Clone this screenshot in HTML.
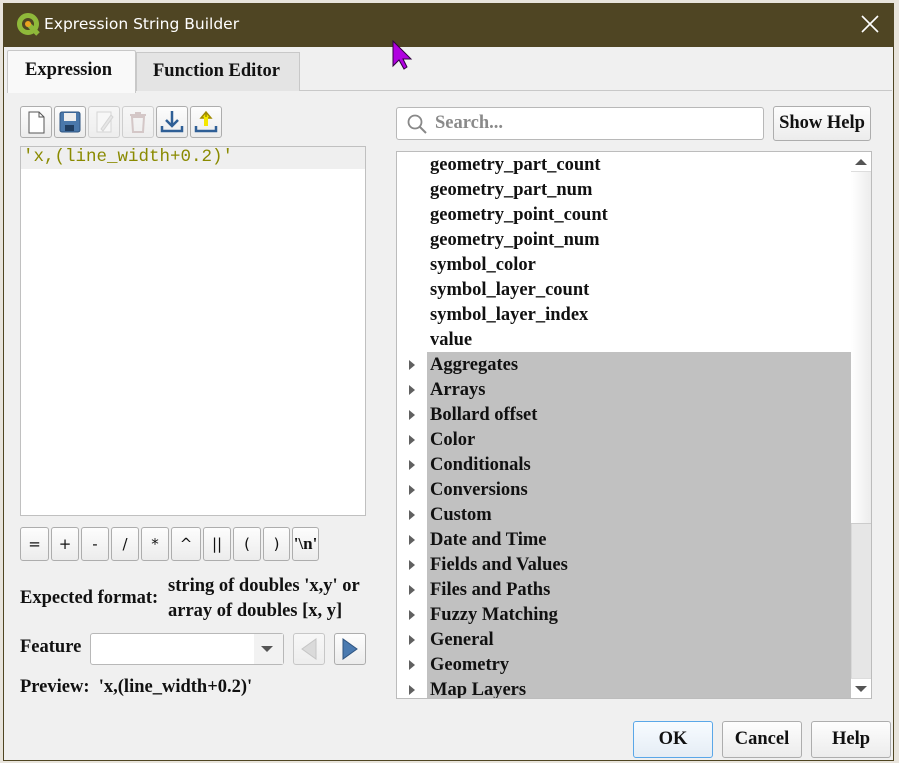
<!DOCTYPE html>
<html><head><meta charset="utf-8"><style>
*{box-sizing:border-box;margin:0;padding:0}
body{width:899px;height:763px;background:#e8e4dc;position:relative;overflow:hidden;font-family:"Liberation Serif",serif;font-weight:bold;color:#111;font-size:18.5px}
.abs{position:absolute}
.dlg{left:3px;top:3px;width:891px;height:758px;background:#f0f0f0;border:1px solid #4f4522}
.title{left:3px;top:3px;width:891px;height:44px;background:#4f4523;color:#fff;font-family:"DejaVu Sans",sans-serif;font-weight:normal;font-size:15.5px}
.btn{position:absolute;border:1px solid #adadad;border-radius:3px;background:linear-gradient(#fdfdfd,#ececec);text-align:center}
.tb{width:32px;height:32px;top:106px}
.ob{width:32px;height:34px;top:527px;font-family:"DejaVu Sans",sans-serif;font-weight:normal;font-size:15px;line-height:32px}
.row{position:absolute;left:430px;height:25px;line-height:25px}
.arr{position:absolute;left:409px;width:0;height:0;border-left:6px solid #606060;border-top:5px solid transparent;border-bottom:5px solid transparent}
</style></head><body>
<div class="abs dlg"></div>
<div class="abs title">
 <svg class="abs" style="left:13px;top:9px" width="26" height="26" viewBox="0 0 26 26"><circle cx="12" cy="12" r="8.5" fill="none" stroke="#8fb93a" stroke-width="5"/><path d="M12 12 L22 22" stroke="#8fb93a" stroke-width="5"/><circle cx="12" cy="12" r="3" fill="#eaa320"/></svg>
 <div class="abs" style="left:41px;top:12px">Expression String Builder</div>
 <svg class="abs" style="left:858px;top:12px" width="18" height="18"><path d="M1 1L17 17M17 1L1 17" stroke="#fff" stroke-width="1.6"/></svg>
</div>
<svg class="abs" style="left:392px;top:40px" width="22" height="30"><path d="M1 1 L1 26 L7 20 L12 29 L15 27 L11 19 L19 19 Z" fill="#b000e0" stroke="#300040" stroke-width="1"/></svg>
<div class="abs" style="left:9px;top:90px;width:883px;height:1px;background:#c8c8c8"></div>
<div class="abs" style="left:136px;top:52px;width:164px;height:39px;background:#e4e4e4;border:1px solid #c8c8c8;border-bottom:none"></div>
<div class="abs" style="left:153px;top:61px">Function Editor</div>
<div class="abs" style="left:7px;top:50px;width:129px;height:43px;background:#f9f9f9;border:1px solid #c8c8c8;border-bottom:none;border-radius:2px 2px 0 0"></div>
<div class="abs" style="left:25px;top:60px">Expression</div>
<div class="btn tb" style="left:20px"><svg width="30" height="30"><path d="M8 5h10l5 5v16H8z" fill="#fff" stroke="#555"/><path d="M18 5v5h5" fill="none" stroke="#555"/></svg></div>
<div class="btn tb" style="left:54px"><svg width="30" height="30"><rect x="5" y="5" width="20" height="20" rx="2" fill="#4a78ab" stroke="#2e5480"/><rect x="9" y="6" width="12" height="8" fill="#eee"/><rect x="10" y="18" width="9" height="6" fill="#1f3d60"/></svg></div>
<div class="btn tb" style="left:88px;opacity:.5"><svg width="30" height="30"><path d="M8 5h14v20H8z" fill="#fff" stroke="#bbb"/><path d="M12 22l10-14 2 2-10 14z" fill="#ddd" stroke="#bbb"/></svg></div>
<div class="btn tb" style="left:122px;opacity:.5"><svg width="30" height="30"><path d="M9 10h12l-1 15H10z" fill="none" stroke="#b9a0a0" stroke-width="2"/><path d="M7 8h16M12 6h6" stroke="#b9a0a0" stroke-width="2"/></svg></div>
<div class="btn tb" style="left:156px"><svg width="30" height="30"><path d="M15 4v14M9 13l6 6 6-6" stroke="#2f5f96" stroke-width="2.5" fill="none"/><path d="M5 19v5h20v-5" stroke="#2f5f96" stroke-width="2.5" fill="none"/></svg></div>
<div class="btn tb" style="left:190px"><svg width="30" height="30"><path d="M15 19V6M10 11l5-6 5 6z" stroke="#a08a00" stroke-width="1.5" fill="#f5e800"/><path d="M13 10h4v9h-4z" fill="#f5e800"/><path d="M5 19v5h20v-5" stroke="#2f5f96" stroke-width="2.5" fill="none"/></svg></div>
<div class="abs" style="left:20px;top:146px;width:346px;height:370px;background:#fff;border:1px solid #c0c0c0"></div>
<div class="abs" style="left:21px;top:147px;width:344px;height:22px;background:#efefef"></div>
<div class="abs" style="left:23px;top:147px;font-family:'Liberation Mono',monospace;font-weight:normal;font-size:17.5px;color:#8a8a00">'x,(line_width+0.2)'</div>
<div class="btn ob" style="left:20px;width:29px">=</div>
<div class="btn ob" style="left:51px;width:28px">+</div>
<div class="btn ob" style="left:81px;width:28px">-</div>
<div class="btn ob" style="left:111px;width:28px">/</div>
<div class="btn ob" style="left:141px;width:28px">*</div>
<div class="btn ob" style="left:171px;width:30px">^</div>
<div class="btn ob" style="left:203px;width:28px">||</div>
<div class="btn ob" style="left:233px;width:28px">(</div>
<div class="btn ob" style="left:263px;width:27px">)</div>
<div class="btn ob" style="left:292px;width:27px;font-family:'Liberation Serif',serif;font-weight:bold;font-size:17px">'\n'</div>
<div class="abs" style="left:20px;top:588px">Expected format:</div>
<div class="abs" style="left:168px;top:574px;line-height:25px">string of doubles 'x,y' or<br>array of doubles [x, y]</div>
<div class="abs" style="left:20px;top:637px">Feature</div>
<div class="abs" style="left:90px;top:633px;width:194px;height:32px;background:#fff;border:1px solid #b8b8b8;border-radius:3px"></div>
<div class="abs" style="left:254px;top:634px;width:29px;height:30px;background:#f2f2f2"></div>
<div class="abs" style="left:261px;top:646px;border-top:6px solid #555;border-left:6px solid transparent;border-right:6px solid transparent"></div>
<div class="btn" style="left:293px;top:633px;width:32px;height:32px;opacity:.6"><svg width="30" height="30"><path d="M22 5v20L8 15z" fill="#ccc" stroke="#aaa"/></svg></div>
<div class="btn" style="left:334px;top:633px;width:32px;height:32px"><svg width="30" height="30"><path d="M8 5v20l14-10z" fill="#4a7ab0" stroke="#2e5480"/></svg></div>
<div class="abs" style="left:20px;top:677px">Preview:&nbsp; 'x,(line_width+0.2)'</div>
<div class="abs" style="left:396px;top:107px;width:368px;height:33px;background:#fff;border:1px solid #b8b8b8;border-radius:3px"></div>
<svg class="abs" style="left:406px;top:113px" width="22" height="22"><circle cx="9" cy="9" r="6.5" fill="none" stroke="#888" stroke-width="1.8"/><path d="M14 14l6 6" stroke="#888" stroke-width="2"/></svg>
<div class="abs" style="left:435px;top:113px;color:#8a8a8a">Search...</div>
<div class="btn" style="left:773px;top:106px;width:98px;height:35px;line-height:33px;white-space:nowrap">Show Help</div>
<div class="abs" style="left:396px;top:151px;width:476px;height:548px;background:#fff;border:1px solid #bcbcbc"></div>
<div class="abs" style="left:427px;top:352px;width:424px;height:346px;background:#c1c1c1"></div>
<div class="row" style="top:153px">geometry_part_count</div>
<div class="row" style="top:178px">geometry_part_num</div>
<div class="row" style="top:203px">geometry_point_count</div>
<div class="row" style="top:228px">geometry_point_num</div>
<div class="row" style="top:253px">symbol_color</div>
<div class="row" style="top:278px">symbol_layer_count</div>
<div class="row" style="top:303px">symbol_layer_index</div>
<div class="row" style="top:328px">value</div>
<div class="row" style="top:353px">Aggregates</div><div class="arr" style="top:360px"></div>
<div class="row" style="top:378px">Arrays</div><div class="arr" style="top:385px"></div>
<div class="row" style="top:403px">Bollard offset</div><div class="arr" style="top:410px"></div>
<div class="row" style="top:428px">Color</div><div class="arr" style="top:435px"></div>
<div class="row" style="top:453px">Conditionals</div><div class="arr" style="top:460px"></div>
<div class="row" style="top:478px">Conversions</div><div class="arr" style="top:485px"></div>
<div class="row" style="top:503px">Custom</div><div class="arr" style="top:510px"></div>
<div class="row" style="top:528px">Date and Time</div><div class="arr" style="top:535px"></div>
<div class="row" style="top:553px">Fields and Values</div><div class="arr" style="top:560px"></div>
<div class="row" style="top:578px">Files and Paths</div><div class="arr" style="top:585px"></div>
<div class="row" style="top:603px">Fuzzy Matching</div><div class="arr" style="top:610px"></div>
<div class="row" style="top:628px">General</div><div class="arr" style="top:635px"></div>
<div class="row" style="top:653px">Geometry</div><div class="arr" style="top:660px"></div>
<div class="row" style="top:678px;height:20px;overflow:hidden">Map Layers</div><div class="arr" style="top:685px"></div>
<div class="abs" style="left:851px;top:152px;width:20px;height:546px;background:#e6e6e6;border-left:1px solid #d8d8d8"></div>
<div class="abs" style="left:851px;top:152px;width:20px;height:20px;background:#fff;border-bottom:1px solid #ddd"></div>
<div class="abs" style="left:855px;top:159px;border-bottom:6px solid #555;border-left:6px solid transparent;border-right:6px solid transparent"></div>
<div class="abs" style="left:851px;top:172px;width:20px;height:352px;background:linear-gradient(90deg,#fff,#ececec);border-bottom:1px solid #ccc"></div>
<div class="abs" style="left:851px;top:678px;width:20px;height:20px;background:#fff;border-top:1px solid #ddd"></div>
<div class="abs" style="left:855px;top:686px;border-top:6px solid #555;border-left:6px solid transparent;border-right:6px solid transparent"></div>
<div class="btn" style="left:633px;top:721px;width:80px;height:37px;line-height:35px;border-color:#5aa7e8;background:linear-gradient(#f7fbff,#e5edf5)">OK</div>
<div class="btn" style="left:722px;top:721px;width:80px;height:37px;line-height:35px">Cancel</div>
<div class="btn" style="left:811px;top:721px;width:80px;height:37px;line-height:35px">Help</div>
</body></html>
